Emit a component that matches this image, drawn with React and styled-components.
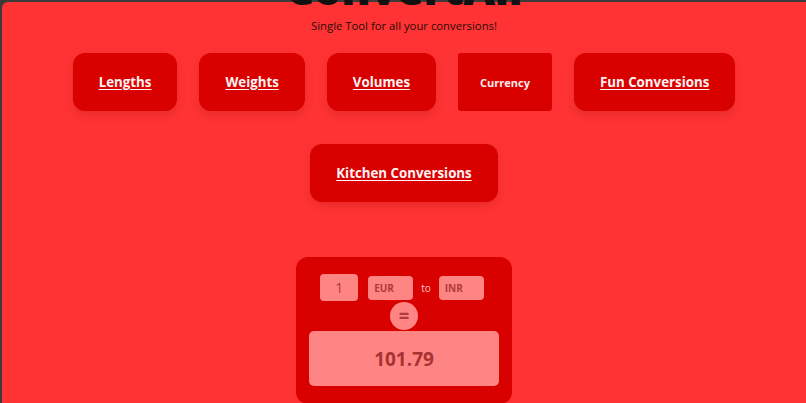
import React from 'react';
import styled, { createGlobalStyle } from 'styled-components';

const GlobalStyle = createGlobalStyle`
  html, body {
    margin: 0;
    background: #3d3a3a;
    overflow: hidden;
  }
  * {
    box-sizing: border-box;
  }
`;

const Page = styled.div`
  margin: 2px 0 0 2px;
  min-height: calc(100vh - 2px);
  background: #ff3333;
  border-top-left-radius: 6px;
  font-family: "Open Sans", "Liberation Sans", sans-serif;
  display: flex;
  flex-direction: column;
  align-items: center;
`;

const Title = styled.h1`
  margin: -34px 0 0;
  height: 40px;
  line-height: 40px;
  font-size: 44px;
  font-weight: 800;
  color: #111;
  letter-spacing: -0.5px;
`;

const Subtitle = styled.p`
  margin: 10px 0 0;
  font-size: 11.3px;
  line-height: 16px;
  color: #2a0b0b;
`;

const Categories = styled.nav`
  margin-top: 19px;
  display: flex;
  flex-wrap: wrap;
  justify-content: center;
  align-items: stretch;
  gap: 33px 22px;
  width: 100%;
`;

const CategoryLink = styled.a`
  display: flex;
  align-items: center;
  justify-content: center;
  padding: 20px 26px;
  min-height: 58px;
  background: #d90000;
  border-radius: 12px;
  box-shadow: 0 4px 10px rgba(120, 0, 0, 0.18);
  color: #fff3f3;
  font-size: 13.3px;
  font-weight: 700;
  text-decoration: underline;
  text-underline-offset: 2px;
`;

const ActiveCategory = styled.div`
  display: flex;
  align-items: center;
  justify-content: center;
  padding: 0 22px;
  min-height: 58px;
  background: #d90000;
  border-radius: 3px;
  color: #ffecec;
  font-size: 11px;
  font-weight: 700;
`;

const Converter = styled.section`
  margin-top: 55px;
  width: 216px;
  padding: 17px 13px 18px;
  background: #d90000;
  border-radius: 12px;
  display: flex;
  flex-direction: column;
  align-items: center;
`;

const InputRow = styled.div`
  display: flex;
  align-items: center;
  gap: 10px;
  margin-left: -4px;
`;

const Field = styled.div`
  display: flex;
  align-items: center;
  justify-content: ${(p) => (p.$center ? 'center' : 'flex-start')};
  width: ${(p) => p.$w}px;
  height: ${(p) => p.$h}px;
  padding: 0 6px;
  background: #ff8585;
  border-radius: 4px;
  color: #b03a3a;
  font-size: ${(p) => (p.$center ? '14px' : '10px')};
  font-weight: ${(p) => (p.$center ? 500 : 700)};
`;

const ToLabel = styled.span`
  margin: 0 -2px;
  font-size: 10px;
  color: #ffc9c9;
`;

const Equals = styled.div`
  margin-top: 1px;
  width: 28px;
  height: 28px;
  border-radius: 50%;
  background: #ff8585;
  color: #b03a3a;
  font-size: 18px;
  font-weight: 800;
  line-height: 27px;
  text-align: center;
  position: relative;
  z-index: 1;
`;

const Result = styled.div`
  margin-top: 1px;
  width: 190px;
  height: 55px;
  border-radius: 5px;
  background: #ff8585;
  display: flex;
  align-items: center;
  justify-content: center;
  color: #a83232;
  font-size: 19px;
  font-weight: 700;
`;

const categories = ['Lengths', 'Weights', 'Volumes', 'Currency', 'Fun Conversions', 'Kitchen Conversions'];

export default function App() {
  return (
    <>
      <GlobalStyle />
      <Page>
        <Title>ConvertAll</Title>
        <Subtitle>Single Tool for all your conversions!</Subtitle>
        <Categories>
          {categories.map((c) =>
            c === 'Currency' ? (
              <ActiveCategory key={c}>{c}</ActiveCategory>
            ) : (
              <CategoryLink key={c} href="#">
                {c}
              </CategoryLink>
            )
          )}
        </Categories>
        <Converter>
          <InputRow>
            <Field $w={38} $h={27} $center>1</Field>
            <Field $w={45} $h={24}>EUR</Field>
            <ToLabel>to</ToLabel>
            <Field $w={45} $h={24}>INR</Field>
          </InputRow>
          <Equals>=</Equals>
          <Result>101.79</Result>
        </Converter>
      </Page>
    </>
  );
}
